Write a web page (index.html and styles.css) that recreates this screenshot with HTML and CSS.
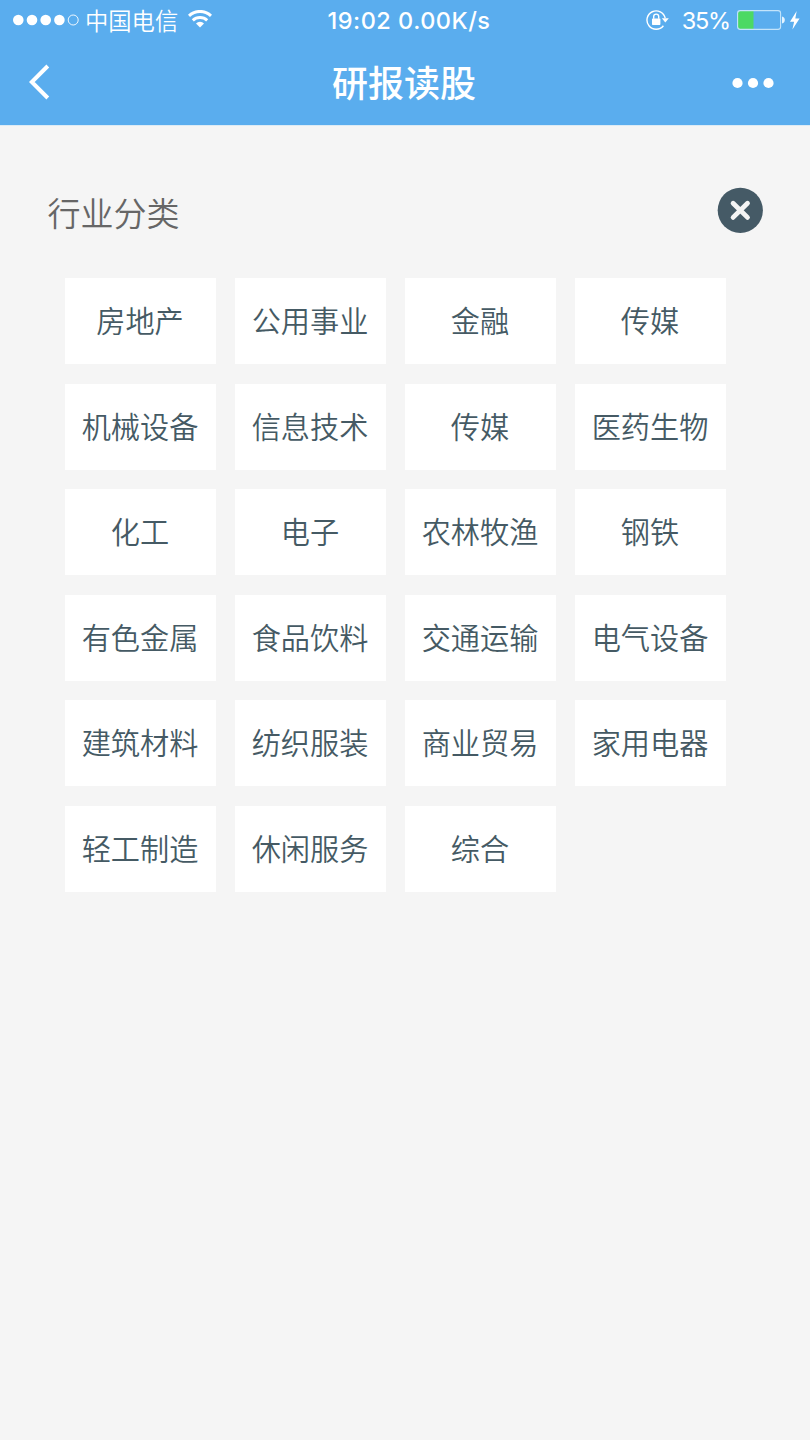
FILE: index.html
```html
<!DOCTYPE html>
<html lang="zh-CN">
<head>
<meta charset="utf-8">
<title>研报读股</title>
<link rel="stylesheet" href="styles.css">
</head>
<body>
<header class="header">
  <div class="status">
    <div class="status-left">
      <svg class="signal" width="66" height="12" viewBox="0 0 66 12" fill="#fff"><circle cx="5.3" cy="6" r="5.3"/><circle cx="19" cy="6" r="5.3"/><circle cx="32.7" cy="6" r="5.3"/><circle cx="46.4" cy="6" r="5.3"/><circle cx="60.2" cy="6" r="5" fill="none" stroke="#fff" stroke-width="0.9"/></svg>
      <span class="carrier">中国电信</span>
      <svg class="wifi" width="24" height="18" viewBox="0 0 24 18" fill="none" stroke="#fff" stroke-width="3"><path d="M1 5.8A16 16 0 0 1 23 5.8"/><path d="M4.8 10.3A10.5 10.5 0 0 1 19.2 10.3"/><path d="M12 17.4L8 13.5A5.4 5.4 0 0 1 16 13.5Z" fill="#fff" stroke="none"/></svg>
    </div>
    <div class="status-center">19:02 0.00K/s</div>
    <div class="status-right">
      <svg width="23" height="22" viewBox="0 0 23 22"><path d="M19.2 9.2A9.2 9.2 0 1 0 17.4 16.8" fill="none" stroke="#fff" stroke-width="1.4"/><path d="M15.8 9.2H22.8L19.3 13.4Z" fill="#fff"/><rect x="6" y="9.4" width="8.4" height="6.6" rx="0.7" fill="#fff"/><path d="M7.7 9.7V7.6A2.5 2.5 0 0 1 12.7 7.6V9.7" fill="none" stroke="#fff" stroke-width="1.4"/></svg>
      <span class="percent">35%</span>
      <svg class="battery" width="48" height="20" viewBox="0 0 48 20"><path d="M3 1H16.5V19H3Q1 19 1 17V3Q1 1 3 1Z" fill="#4cd964"/><rect x="0.6" y="0.6" width="43" height="18.8" rx="2.6" fill="none" stroke="#c3e4fb" stroke-width="1.1"/><path d="M45 6.5Q47.8 7.2 47.8 10T45 13.5Z" fill="#e5f4ff"/></svg>
      <svg class="bolt" width="10" height="19" viewBox="0 0 10 19"><path d="M6.7 0L0 10.7H4.1L2.4 18.6L9.6 7.5H5.3Z" fill="#fff"/></svg>
    </div>
  </div>
  <div class="nav">
    <svg class="back" width="22" height="36" viewBox="0 0 22 36"><path d="M18.8 2L2.8 18L18.8 34" fill="none" stroke="#fff" stroke-width="4"/></svg>
    <h1 class="title">研报读股</h1>
    <svg class="more" width="42" height="12" viewBox="0 0 42 12" fill="#fff"><circle cx="5.5" cy="6" r="5.1"/><circle cx="21" cy="6" r="5.1"/><circle cx="36.5" cy="6" r="5.1"/></svg>
  </div>
</header>
<main>
  <div class="section-head">
    <h2 class="section-title">行业分类</h2>
    <svg width="46" height="46" viewBox="0 0 46 46"><circle cx="23.3" cy="23.3" r="22.6" fill="#455a66"/><path d="M16.1 16.2L30.5 30.4M30.5 16.2L16.1 30.4" stroke="#f4f4f4" stroke-width="4.8" stroke-linecap="round"/></svg>
  </div>
  <div class="grid">
    <div class="tile">房地产</div><div class="tile">公用事业</div><div class="tile">金融</div><div class="tile">传媒</div>
    <div class="tile">机械设备</div><div class="tile">信息技术</div><div class="tile">传媒</div><div class="tile">医药生物</div>
    <div class="tile">化工</div><div class="tile">电子</div><div class="tile">农林牧渔</div><div class="tile">钢铁</div>
    <div class="tile">有色金属</div><div class="tile">食品饮料</div><div class="tile">交通运输</div><div class="tile">电气设备</div>
    <div class="tile">建筑材料</div><div class="tile">纺织服装</div><div class="tile">商业贸易</div><div class="tile">家用电器</div>
    <div class="tile">轻工制造</div><div class="tile">休闲服务</div><div class="tile">综合</div>
  </div>
</main>
</body>
</html>
```
FILE: styles.css
```css
* { box-sizing: border-box; }
body {
  margin: 0;
  min-height: 1440px;
  background: #f5f5f5;
  font-family: "Noto Sans CJK SC", sans-serif;
}
svg { display: block; flex: none; }
.header { height: 126px; background: #5aadee; border-bottom: 1px solid #dcebf5; color: #fff; }
.status {
  display: grid;
  grid-template-columns: 1fr auto 1fr;
  align-items: center;
  height: 40px;
  padding: 0 10px 0 13px;
  white-space: nowrap;
}
.status-left, .status-right { display: flex; align-items: center; }
.status-left { height: 40px; }
.carrier { margin-left: 6px; font-size: 23.3px; font-weight: 350; line-height: 39px; }
.wifi { margin: 0 0 2px 10px; }
.status-center {
  padding: 2px 0 0 5px;
  font: 500 23.5px/38px Inter, sans-serif;
  letter-spacing: 0.5px;
}
.status-right { justify-content: flex-end; }
.percent {
  margin-left: 13px;
  padding-top: 2px;
  font: 400 23.5px/38px Inter, sans-serif;
  letter-spacing: -1.2px;
}
.battery { margin-left: 7px; }
.bolt { margin-left: 5px; }
.nav {
  display: grid;
  grid-template-columns: 1fr auto 1fr;
  align-items: center;
  height: 85px;
  padding: 0 36px 0 29px;
}
.back { margin-bottom: 2px; }
.title { margin: 0; padding: 0 0 2px 5px; font-size: 36px; font-weight: 500; line-height: 83px; }
.more { justify-self: end; }
.section-head {
  display: flex;
  align-items: center;
  justify-content: space-between;
  padding: 61px 47px 0 47.5px;
}
.section-title { margin: 0; padding-top: 4px; font-size: 33px; font-weight: 350; line-height: 42px; color: #666; }
.grid {
  display: grid;
  grid-template-columns: repeat(4, 151px);
  grid-auto-rows: 86px;
  gap: 19.6px 19px;
  padding: 45px 0 0 64.5px;
}
.tile {
  background: #fff;
  color: #455a64;
  font-size: 29.2px;
  font-weight: 350;
  line-height: 83px;
  text-align: center;
}
```
